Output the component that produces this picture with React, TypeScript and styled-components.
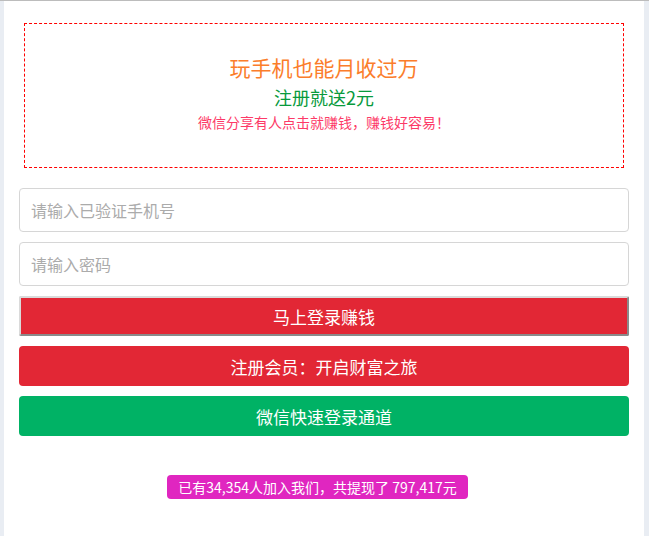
import React from "react";
import styled, { createGlobalStyle } from "styled-components";

const Global = createGlobalStyle`
  html, body { margin: 0; padding: 0; }
  body {
    background: #e9edf3;
    font-family: "Noto Sans CJK SC", "Noto Sans", sans-serif;
  }
  * { box-sizing: border-box; }
`;

const Page = styled.div`
  border-top: 1px solid #bcbcbc;
  min-height: 100vh;
`;

const Panel = styled.main`
  width: 640px;
  margin-left: 4px;
  background: #fff;
  min-height: calc(100vh - 1px);
  padding: 22px 15px 30px;
  display: flex;
  flex-direction: column;
`;

const Promo = styled.section`
  margin: 0 5px 20px;
  border: 1px dashed #ff0000;
  padding: 28px 0 35px;
  display: flex;
  flex-direction: column;
  align-items: center;
  text-align: center;
`;

const PromoLine = styled.div<{ $color: string; $size: number; $lh: number }>`
  color: ${(p) => p.$color};
  font-size: ${(p) => p.$size}px;
  line-height: ${(p) => p.$lh}px;
`;

const Form = styled.form`
  display: flex;
  flex-direction: column;
  gap: 10px;
`;

const Input = styled.input`
  height: 44px;
  width: 100%;
  border: 1px solid #d6d6d6;
  border-radius: 4px;
  padding: 0 11px;
  font-size: 16px;
  font-family: inherit;
  color: #333;
  outline: none;
  &::placeholder { color: #ababab; }
`;

const Button = styled.button<{ $bg: string; $raised?: boolean }>`
  height: 40px;
  width: 100%;
  background: ${(p) => p.$bg};
  color: #fff;
  font-size: 17px;
  font-family: inherit;
  cursor: pointer;
  display: flex;
  align-items: center;
  justify-content: center;
  padding: 0;
  ${(p) =>
    p.$raised
      ? `border-style: solid; border-width: 2px;
         border-color: #dadada #8a8a8a #8a8a8a #dadada;
         border-radius: 2px;`
      : `border: none; border-radius: 4px;`}
`;

const Footer = styled.div`
  display: flex;
  justify-content: center;
  margin-top: 39px;
  padding-right: 13px;
`;

const Badge = styled.span`
  background: #e026c0;
  color: #fff;
  font-size: 14px;
  line-height: 24px;
  height: 24px;
  padding: 0 11px;
  border-radius: 4px;
  font-weight: 400;
  white-space: nowrap;
`;

export default function App() {
  return (
    <Page>
      <Global />
      <Panel>
        <Promo>
          <PromoLine $color="#fb7d2b" $size={21} $lh={30}>玩手机也能月收过万</PromoLine>
          <PromoLine $color="#089a3c" $size={18} $lh={30}>注册就送2元</PromoLine>
          <PromoLine $color="#fd3a67" $size={14} $lh={20}>微信分享有人点击就赚钱，赚钱好容易！</PromoLine>
        </Promo>
        <Form onSubmit={(e) => e.preventDefault()}>
          <Input type="text" placeholder="请输入已验证手机号" />
          <Input type="password" placeholder="请输入密码" />
          <Button type="submit" $bg="#e22735" $raised>马上登录赚钱</Button>
          <Button type="button" $bg="#e22735">注册会员：开启财富之旅</Button>
          <Button type="button" $bg="#00b265">微信快速登录通道</Button>
        </Form>
        <Footer>
          <Badge>已有34,354人加入我们，共提现了 797,417元</Badge>
        </Footer>
      </Panel>
    </Page>
  );
}
